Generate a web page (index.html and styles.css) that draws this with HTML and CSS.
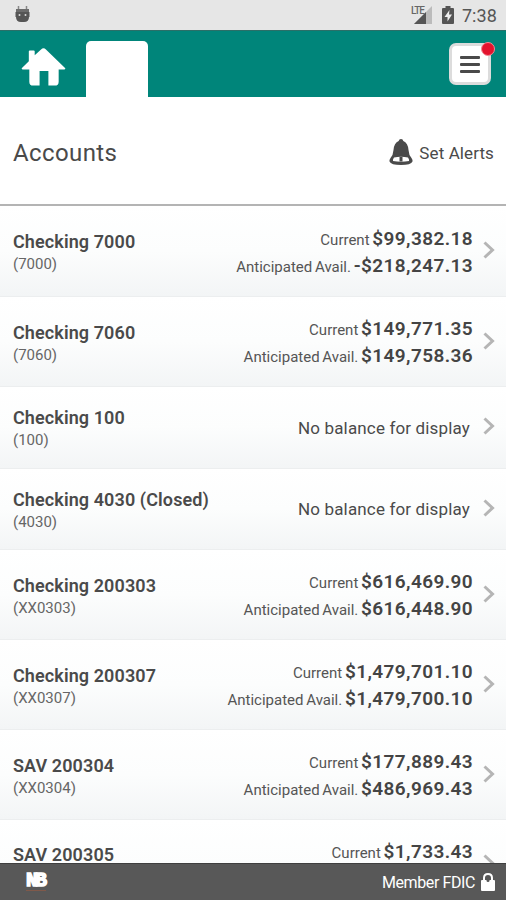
FILE: index.html
```
<!DOCTYPE html>
<html lang="en">
<head>
  <meta charset="utf-8">
  <meta name="viewport" content="width=device-width">
  <title>Accounts</title>
  <link rel="stylesheet" href="styles.css">
</head>
<body>
<div id="app">
  <div class="status">
    <svg class="droid" width="16" height="18" viewBox="0 0 16 18">
      <path d="M4.500 1v4M12.500 1v4" stroke="#888" stroke-width="1.500"/>
      <path d="M2 4h13v3h.5v5H15q0 5-5 5H7q-5 0-5-5h-.5V7H2z" fill="#555"/>
      <path d="M2 4h13v3H2z" fill="#6c6c6c"/>
      <circle cx="5.500" cy="10" r="1" fill="#ddd"/>
      <circle cx="11.500" cy="10" r="1" fill="#ddd"/>
    </svg>
    <div class="status-right">
      <div class="signal">
        <span>LTE</span>
        <svg width="18" height="18" viewBox="0 0 18 18">
          <path d="M18 0v18H0z" fill="#bbb"/>
          <path d="M12 6v12H0z" fill="#555"/>
        </svg>
      </div>
      <svg class="battery" width="12" height="18" viewBox="0 0 12 18">
        <path d="M3.500 0h5v2H11q1 0 1 1v14q0 1-1 1H1q-1 0-1-1V3q0-1 1-1h2.500z" fill="#555"/>
        <path d="M7.500 4L2.500 11h3v4.500l4.500-7H7z" fill="#eee"/>
      </svg>
      <span class="time">7:38</span>
    </div>
  </div>

  <div class="nav">
    <svg class="home" width="46" height="41" viewBox="0 0 46 41">
      <path d="M8 4q0-1 1-1h4q1 0 1 1v4l6.500-6q2.500-2.500 5 0L45 21q1 1.500-1 1.500h-5.500V35q0 4-4 4H28V24h-9v15h-6.500q-4 0-4-4V22.500H2q-2 0-1-1.500l7-7z" fill="#fff"/>
    </svg>
    <div class="tab"></div>
    <div class="menu">
      <i></i><i></i><i></i>
      <b class="dot"></b>
    </div>
  </div>

  <div class="title">
    <h1>Accounts</h1>
    <div class="alerts">
      <svg width="24" height="26" viewBox="0 0 24 26">
        <path d="M12 0q2 0 2.300 2Q19 4 19.500 11q.3 5 3 8 1.500 2 1 3.500Q22 26 12 26T.5 22.500q-.5-1.500 1-3.500 2.700-3 3-8Q5 4 9.700 2 10 0 12 0z" fill="#4a4a4a"/>
        <path d="M5 18.500q7-1.500 14 0 1.500 2 1 3.500-8 1.500-16 0-.5-1.500 1-3.500z" fill="#fff"/>
        <path d="M10.500 18h3v4.500h-3z" fill="#4a4a4a"/>
      </svg>
      <span>Set Alerts</span>
    </div>
  </div>

  <ul class="list">
    <li>
      <div class="name"><h2>Checking 7000</h2><p>(7000)</p></div>
      <div class="money">
        <p>Current <b>$99,382.18</b></p>
        <p>Anticipated Avail. <b>-$218,247.13</b></p>
      </div>
      <svg class="arrow" width="12" height="18" viewBox="0 0 12 18"><path d="M1.500 1.500L9.500 9l-8 7.500"/></svg>
    </li>
    <li>
      <div class="name"><h2>Checking 7060</h2><p>(7060)</p></div>
      <div class="money">
        <p>Current <b>$149,771.35</b></p>
        <p>Anticipated Avail. <b>$149,758.36</b></p>
      </div>
      <svg class="arrow" width="12" height="18" viewBox="0 0 12 18"><path d="M1.500 1.500L9.500 9l-8 7.500"/></svg>
    </li>
    <li class="empty">
      <div class="name"><h2>Checking 100</h2><p>(100)</p></div>
      <div class="none">No balance for display</div>
      <svg class="arrow" width="12" height="18" viewBox="0 0 12 18"><path d="M1.500 1.500L9.500 9l-8 7.500"/></svg>
    </li>
    <li class="empty">
      <div class="name"><h2>Checking 4030 (Closed)</h2><p>(4030)</p></div>
      <div class="none">No balance for display</div>
      <svg class="arrow" width="12" height="18" viewBox="0 0 12 18"><path d="M1.500 1.500L9.500 9l-8 7.500"/></svg>
    </li>
    <li>
      <div class="name"><h2>Checking 200303</h2><p>(XX0303)</p></div>
      <div class="money">
        <p>Current <b>$616,469.90</b></p>
        <p>Anticipated Avail. <b>$616,448.90</b></p>
      </div>
      <svg class="arrow" width="12" height="18" viewBox="0 0 12 18"><path d="M1.500 1.500L9.500 9l-8 7.500"/></svg>
    </li>
    <li>
      <div class="name"><h2>Checking 200307</h2><p>(XX0307)</p></div>
      <div class="money">
        <p>Current <b>$1,479,701.10</b></p>
        <p>Anticipated Avail. <b>$1,479,700.10</b></p>
      </div>
      <svg class="arrow" width="12" height="18" viewBox="0 0 12 18"><path d="M1.500 1.500L9.500 9l-8 7.500"/></svg>
    </li>
    <li>
      <div class="name"><h2>SAV 200304</h2><p>(XX0304)</p></div>
      <div class="money">
        <p>Current <b>$177,889.43</b></p>
        <p>Anticipated Avail. <b>$486,969.43</b></p>
      </div>
      <svg class="arrow" width="12" height="18" viewBox="0 0 12 18"><path d="M1.500 1.500L9.500 9l-8 7.500"/></svg>
    </li>
    <li class="last">
      <div class="name"><h2>SAV 200305</h2></div>
      <div class="money">
        <p>Current <b>$1,733.43</b></p>
      </div>
      <svg class="arrow" width="12" height="18" viewBox="0 0 12 18"><path d="M1.500 1.500L9.500 9l-8 7.500"/></svg>
    </li>
  </ul>

  <div class="footer">
    <div class="logo"><span>N</span><span>B</span></div>
    <div class="fdic">
      <span>Member FDIC</span>
      <svg width="14" height="18" viewBox="0 0 14 18">
        <path d="M3 8V5q0-4 4-4t4 4v3" fill="none" stroke="#fff" stroke-width="2"/>
        <rect y="7" width="14" height="11" rx="1" fill="#fff"/>
        <circle cx="7" cy="7.500" r="1.500" fill="#585858"/>
      </svg>
    </div>
  </div>
</div>
</body>
</html>
```
FILE: styles.css
```
* {
  margin: 0;
  padding: 0;
  box-sizing: border-box;
  list-style: none;
}
body {
  font-family: Roboto, "Liberation Sans", sans-serif;
  color: #4a4a4a;
  background: #fff;
}
svg {
  display: block;
  flex: none;
}
#app {
  width: 506px;
  height: 900px;
  display: flex;
  flex-direction: column;
  overflow: hidden;
}

/* status bar */
.status {
  height: 30px;
  flex: none;
  display: flex;
  justify-content: space-between;
  padding: 0 9px 0 14px;
  background: #e6e6e6;
}
.droid {
  margin-top: 5px;
}
.status-right {
  display: flex;
}
.signal {
  display: flex;
  margin-top: 6px;
}
.signal span {
  font-size: 10px;
  line-height: 10px;
  font-weight: 500;
  letter-spacing: -1px;
  color: #666;
  margin-right: -10px;
}
.battery {
  margin: 6px 8px 0 10px;
}
.time {
  font-size: 18px;
  line-height: 32px;
  letter-spacing: 0.1px;
  color: #555;
}

/* green bar */
.nav {
  height: 67px;
  flex: none;
  display: flex;
  padding: 10px 15px 0 21px;
  background: #00857a;
  border-top: 1px solid #2b6f68;
}
.home {
  width: 45px;
  margin-top: 6px;
}
.tab {
  width: 62px;
  height: 57px;
  margin-left: 20px;
  background: #fff;
  border-radius: 5px 5px 0 0;
}
.menu {
  width: 42px;
  height: 42px;
  margin: 2px 0 0 auto;
  position: relative;
  display: flex;
  flex-direction: column;
  align-items: center;
  justify-content: center;
  gap: 4px;
  background: #fff;
  border: 3px solid #dcdcdc;
  border-radius: 7px;
}
.menu i {
  width: 20px;
  height: 3px;
  background: #4a4a4a;
  border-radius: 1px;
}
.dot {
  position: absolute;
  top: -4px;
  right: -7px;
  width: 14px;
  height: 14px;
  border-radius: 50%;
  background: #e3122d;
  border: 1px solid #f08a94;
}

.title {
  height: 109px;
  flex: none;
  display: flex;
  justify-content: space-between;
  align-items: center;
  padding: 4px 12px 0 13px;
  border-bottom: 2px solid #b4b4b4;
}
.title h1 {
  font-size: 24px;
  font-weight: 400;
  letter-spacing: 0.4px;
}
.alerts {
  display: flex;
  align-items: center;
  gap: 6px;
  font-size: 17px;
  letter-spacing: 0.1px;
}
.alerts svg {
  margin-bottom: 2px;
}

/* accounts */
.list {
  flex: 1;
  min-height: 0;
  overflow: hidden;
}
.list li {
  height: 90px;
  display: flex;
  align-items: center;
  padding: 0 11px 0 13px;
  background: linear-gradient(#fff, #fcfdfd 50%, #f3f5f6);
  border-bottom: 1px solid #eceeef;
}
.list .empty {
  height: 81.5px;
}
.list li:first-child {
  height: 91px;
}
.name {
  flex: 1;
  padding-top: 3px;
}
.name h2 {
  font-size: 18px;
  line-height: 24px;
  font-weight: 600;
  letter-spacing: 0.1px;
}
.name p {
  font-size: 15px;
  line-height: 21px;
  color: #666;
}
.money {
  text-align: right;
  padding-top: 5px;
}
.money p {
  font-size: 15px;
  line-height: 27px;
  height: 27px;
  word-spacing: -1px;
  color: #555;
}
.money b {
  font-size: 19px;
  line-height: 20px;
  font-weight: 600;
  letter-spacing: 0.4px;
  color: #444;
}
.none {
  font-size: 17px;
  letter-spacing: 0.15px;
  padding-top: 1px;
  margin-right: 3px;
}
.arrow {
  margin: 0 0 2px 10px;
}
.arrow path {
  fill: none;
  stroke: #b5b5b5;
  stroke-width: 3;
}
.list .last {
  align-items: flex-start;
  padding-top: 20px;
}
.last .name {
  padding-top: 5px;
}
.last h2 {
  line-height: 20px;
}
.last .money {
  padding-top: 0;
}
.last .arrow {
  margin-top: 14px;
}

.footer {
  height: 37px;
  flex: none;
  display: flex;
  justify-content: space-between;
  align-items: center;
  padding: 0 11px 0 26px;
  background: #585858;
  border-top: 1px solid #3f3f3f;
  color: #fff;
}
.logo {
  width: 20px;
  font: bold 20px/19px "Liberation Mono", monospace;
  -webkit-text-stroke: 1.5px #fff;
  border-bottom: 1px solid #80594a;
  margin-bottom: 2px;
  letter-spacing: -3px;
}
.fdic {
  display: flex;
  align-items: center;
  gap: 6px;
  font-size: 16px;
  letter-spacing: -0.4px;
}
```
